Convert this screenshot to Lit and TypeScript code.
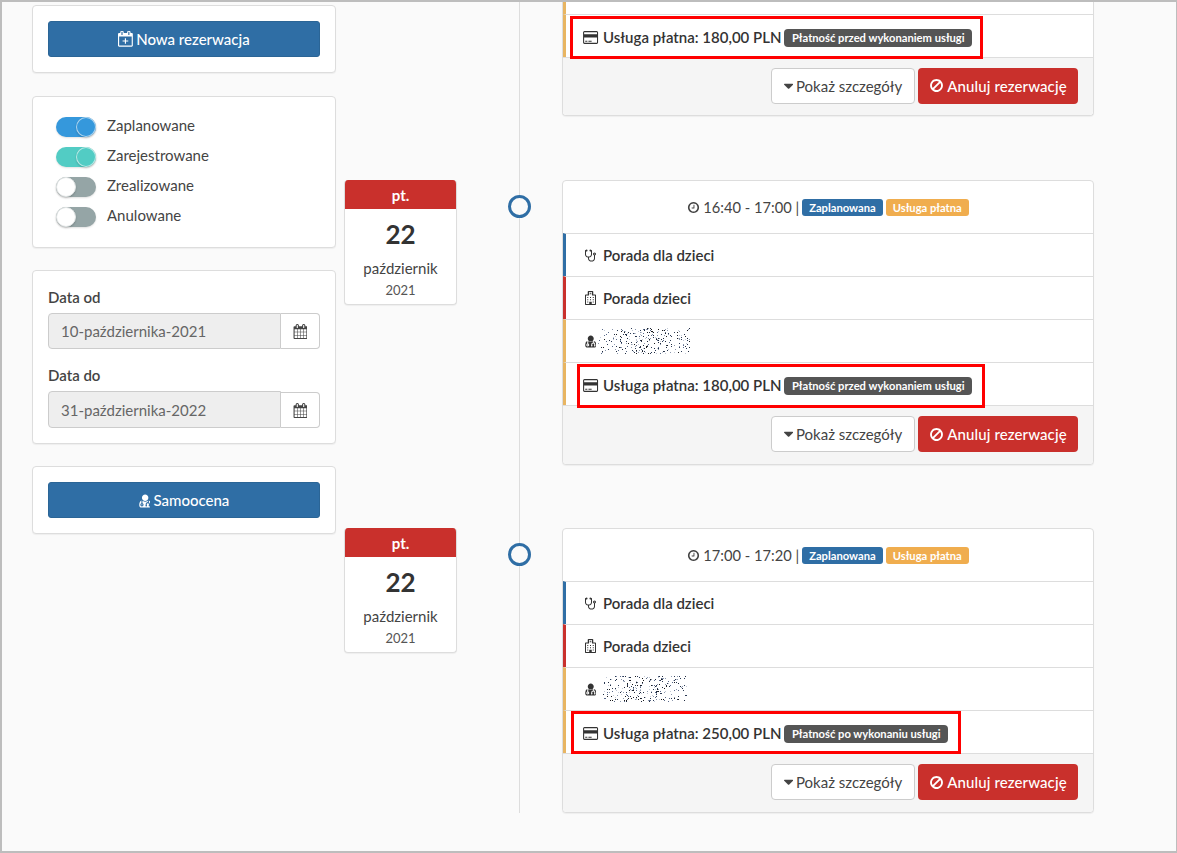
import { LitElement, html, css, svg } from "lit";
import { customElement } from "lit/decorators.js";

const P: Record<string, [number, number, string]> = {
  card: [2048, 1792, "M1760 128q66 0 113 47t47 113v1216q0 66-47 113t-113 47h-1472q-66 0-113-47t-47-113v-1216q0-66 47-113t113-47h1472zm-1472 128q-13 0-22.5 9.5t-9.5 22.5v224h1536v-224q0-13-9.5-22.5t-22.5-9.5h-1472zm1472 1280q13 0 22.5-9.5t9.5-22.5v-608h-1536v608q0 13 9.5 22.5t22.5 9.5h1472zm-1376-128v-128h256v128h-256zm384 0v-128h384v128h-384z"],
  clock: [1792, 1792, "M1024 544v448q0 14-9 23t-23 9h-320q-14 0-23-9t-9-23v-64q0-14 9-23t23-9h224v-352q0-14 9-23t23-9h64q14 0 23 9t9 23zm416 352q0-148-73-273t-198-198-273-73-273 73-198 198-73 273 73 273 198 198 273 73 273-73 198-198 73-273zm224 0q0 209-103 385.5t-279.5 279.5-385.5 103-385.5-103-279.5-279.5-103-385.5 103-385.5 279.5-279.5 385.5-103 385.5 103 279.5 279.5 103 385.5z"],
  ban: [1792, 1792, "M1440 893q0-161-87-295l-754 753q137 89 297 89 111 0 211.5-43.5t173.5-116.5 116-174.5 43-212.5zm-999 299l755-754q-135-91-300-91-148 0-273 73t-198 199-73 274q0 162 89 299zm1223-299q0 157-61 300t-163.5 246-245 164-298.5 61-298.5-61-245-164-163.5-246-61-300 61-299.5 163.5-245.5 245-164 298.5-61 298.5 61 245 164 163.5 245.5 61 299.5z"],
  caret: [1024, 1792, "M1024 704q0 26-19 45l-448 448q-19 19-45 19t-45-19l-448-448q-19-19-19-45t19-45 45-19h896q26 0 45 19t19 45z"],
  cal: [1664, 1792, "M192 1664h288v-288h-288v288zm352 0h320v-288h-320v288zm-352-352h288v-320h-288v320zm352 0h320v-320h-320v320zm-352-384h288v-288h-288v288zm736 736h320v-288h-320v288zm-384-736h320v-288h-320v288zm768 736h288v-288h-288v288zm-384-352h320v-320h-320v320zm-352-864v-288q0-13-9.5-22.5t-22.5-9.5h-64q-13 0-22.5 9.5t-9.5 22.5v288q0 13 9.5 22.5t22.5 9.5h64q13 0 22.5-9.5t9.5-22.5zm736 864h288v-320h-288v320zm-384-384h320v-288h-320v288zm384 0h288v-288h-288v288zm32-480v-288q0-13-9.5-22.5t-22.5-9.5h-64q-13 0-22.5 9.5t-9.5 22.5v288q0 13 9.5 22.5t22.5 9.5h64q13 0 22.5-9.5t9.5-22.5zm384-64v1280q0 52-38 90t-90 38h-1408q-52 0-90-38t-38-90v-1280q0-52 38-90t90-38h128v-96q0-66 47-113t113-47h64q66 0 113 47t47 113v96h384v-96q0-66 47-113t113-47h64q66 0 113 47t47 113v96h128q52 0 90 38t38 90z"],
  calplus: [1664, 1792, "M1536 224q52 0 90 38t38 90v1280q0 52-38 90t-90 38h-1408q-52 0-90-38t-38-90v-1280q0-52 38-90t90-38h128v-96q0-66 47-113t113-47h64q66 0 113 47t47 113v96h384v-96q0-66 47-113t113-47h64q66 0 113 47t47 113v96h128zm-384-96v288q0 14 9 23t23 9h64q14 0 23-9t9-23v-288q0-14-9-23t-23-9h-64q-14 0-23 9t-9 23zm-768 0v288q0 14 9 23t23 9h64q14 0 23-9t9-23v-288q0-14-9-23t-23-9h-64q-14 0-23 9t-9 23zm1152 1504v-1024h-1408v1024h1408zm-640-576h224q14 0 23 9t9 23v64q0 14-9 23t-23 9h-224v224q0 14-9 23t-23 9h-64q-14 0-23-9t-9-23v-224h-224q-14 0-23-9t-9-23v-64q0-14 9-23t23-9h224v-224q0-14 9-23t23-9h64q14 0 23 9t9 23v224z"],
  steth: [1408, 1792, "M1280 768q0-26-19-45t-45-19-45 19-19 45 19 45 45 19 45-19 19-45zm128 0q0 62-35 111.5t-93 72.5v397q0 159-131.5 271.5t-316.5 112.5-316.5-112.5-131.5-271.5v-132q-164-20-274-128t-110-252v-512q0-26 19-45t45-19q6 0 16 2 17-30 47-48t65-18q53 0 90.5 37.5t37.5 90.5-37.5 90.5-90.5 37.5q-33 0-64-18v402q0 106 94 181t226 75 226-75 94-181v-402q-31 18-64 18-53 0-90.5-37.5t-37.5-90.5 37.5-90.5 90.5-37.5q35 0 65 18t47 48q10-2 16-2 26 0 45 19t19 45v512q0 144-110 252t-274 128v132q0 106 94 181t226 75 226-75 94-181v-397q-58-23-93-72.5t-35-111.5q0-80 56-136t136-56 136 56 56 136z"],
  hosp: [1408, 1792, "M448 0h512q40 0 68 28t28 68v352h256q40 0 68 28t28 68v1152q0 40-28 68t-68 28h-1216q-40 0-68-28t-28-68v-1152q0-40 28-68t68-28h256v-352q0-40 28-68t68-28zM512 128v448h-352q-32 0-32 32v1024q0 32 32 32h384v-256q0-32 32-32h256q32 0 32 32v256h384q32 0 32-32v-1024q0-32-32-32h-352v-448h-384zM608 192h64v96h64v-96h64v256h-64v-96h-64v96h-64zM288 768h128v128h-128zM640 768h128v128h-128zM992 768h128v128h-128zM288 1056h128v128h-128zM640 1056h128v128h-128zM992 1056h128v128h-128zM288 1344h128v128h-128zM992 1344h128v128h-128z"],
  user: [1408, 1792, "M416 1408q0 26-19 45t-45 19-45-19-19-45 19-45 45-19 45 19 19 45zm1024 62q0 121-73 190t-194 69h-874q-121 0-194-69t-73-190q0-68 5.5-131t24-138 47.5-132.5 81-103 120-60.5q-22 52-22 120v203q-58 20-93 70t-35 111q0 80 56 136t136 56 136-56 56-136q0-61-35.5-111t-92.5-70v-203q0-62 25-93 132 104 295 104t295-104q25 31 25 93v64q-106 0-181 75t-75 181v89q-32 29-32 71 0 40 28 68t68 28 68-28 28-68q0-42-32-71v-89q0-52 38-90t90-38 90 38 38 90v89q-32 29-32 71 0 40 28 68t68 28 68-28 28-68q0-42-32-71v-89q0-68-34.5-127.5t-93.5-93.5q0-10 .5-42.5t0-48-2.5-41.5-7-47-13-40q68 15 120 60.5t81 103 47.5 132.5 24 138 5.5 131zm-320-893q0 159-112.5 271.5t-271.5 112.5-271.5-112.5-112.5-271.5 112.5-271.5 271.5-112.5 271.5 112.5 112.5 271.5z"],
};

const icon = (n: string, h = 14) => {
  const [w, vh, d] = P[n];
  return html`<svg class="ic" viewBox="0 0 ${w} ${vh}" width=${(h * w) / 1792} height=${h} fill-rule=${n === "hosp" ? "evenodd" : "nonzero"}><path fill="currentColor" d=${d}></path></svg>`;
};

function noise(seed: number, w: number, h: number) {
  let s = seed;
  const rnd = () => ((s = (s * 16807) % 2147483647) - 1) / 2147483646;
  const cols = ["#2b3a55", "#1f2a3f", "#1a1a1a", "#5a6a8a", "#8b97ad", "#c2c9d6"];
  const dots: unknown[] = [];
  for (let i = 0; i < 400; i++) {
    const x = Math.floor(rnd() * w);
    const env = 1 - Math.abs((x / w) * 2 - 1) * 0.6;
    const y = Math.floor(rnd() * h);
    if (rnd() > env) continue;
    const c = cols[Math.floor(rnd() * cols.length)];
    dots.push(svg`<rect x=${x} y=${y} width="1" height="1" fill=${c}></rect>`);
  }
  return html`<svg class="noise" width=${w} height=${h} viewBox="0 0 ${w} ${h}" aria-hidden="true">${dots}</svg>`;
}

interface Ev { time: string; price: string; pay: string; boxL: number; boxW: number; boxT: number; boxH: number; seed: number; nW: number; nL: number; }

const FIRST: Ev = { time: "", price: "180,00", pay: "Płatność przed wykonaniem usługi", boxL: 7, boxW: 413, boxT: 2, boxH: 43, seed: 77, nW: 92, nL: 0 };
const EVENTS: Ev[] = [
  { time: "16:40 - 17:00", price: "180,00", pay: "Płatność przed wykonaniem usługi", boxL: 14, boxW: 408, boxT: 2, boxH: 44, seed: 4242, nW: 92, nL: 0 },
  { time: "17:00 - 17:20", price: "250,00", pay: "Płatność po wykonaniu usługi", boxL: 8, boxW: 390, boxT: 1, boxH: 43, seed: 9191, nW: 84, nL: 5 },
];

@customElement("app-root")
export class AppRoot extends LitElement {
  static styles = css`
    :host { display: block; font-family: "Lato", "Liberation Sans", sans-serif; color: #333; font-size: 15px; }
    * { box-sizing: border-box; }
    .frame { height: 853px; width: 1177px; border: 2px solid #bdbdbd; border-right-width: 1px; background: #fafafa; overflow: hidden; display: flex; align-items: flex-start; padding-left: 30px; gap: 8px; }
    .ic { display: inline-block; vertical-align: -2px; flex: none; }

    .side { width: 304px; flex: none; padding-top: 3px; display: flex; flex-direction: column; }
    .panel { background: #fff; border: 1px solid #ddd; border-radius: 4px; box-shadow: 0 1px 1px rgba(0,0,0,.05); padding: 15px; }
    .panel.btnp { height: 68px; }
    .panel.toggles { margin-top: 23px; height: 152px; padding: 19px 8px 15px; display: flex; flex-direction: column; gap: 10px; }
    .panel.dates { margin-top: 22px; height: 174px; }
    .panel.btnp.last { margin-top: 22px; }
    .primary { height: 36px; background: #2f6ea5; border: 1px solid #2b6596; border-radius: 3px; color: #fff; display: flex; align-items: center; justify-content: center; gap: 3px; font-size: 15px; font-weight: 500; }

    .tg { display: flex; align-items: flex-start; height: 20px; font-size: 15px; line-height: 18px; color: #444; }
    .sw { width: 40px; height: 20px; border-radius: 10px; margin: 1px 11px 0 15px; display: flex; box-shadow: 0 1px 2px rgba(0,0,0,.12); flex: none; }
    .sw i { width: 20px; height: 20px; border-radius: 50%; display: block; border: 1px solid rgba(255,255,255,.6); box-shadow: 0 1px 2px rgba(0,0,0,.2); }
    .sw.on { justify-content: flex-end; }
    .sw.blue, .sw.blue i { background: #3598dc; }
    .sw.teal, .sw.teal i { background: #52ccc4; }
    .sw.off { background: #95a5a6; }
    .sw.off i { background: #fff; border-color: #e2e6e6; }

    .lbl { font-weight: 600; font-size: 15px; line-height: 18px; color: #444; margin: 2px 0 7px; }
    .lbl.two { margin-top: 17px; margin-bottom: 7px; }
    .ig { display: flex; height: 36px; }
    .ig.tall { height: 37px; }
    .ig .val { flex: 1; background: #eee; border: 1px solid #ccc; border-radius: 4px 0 0 4px; padding-left: 12px; display: flex; align-items: center; color: #666; font-size: 15px; }
    .ig .add { width: 39px; border: 1px solid #ccc; border-left: 0; border-radius: 0 4px 4px 0; background: #fff; display: flex; align-items: center; justify-content: center; color: #444; }
    .ig.tall .add { margin-top: 1px; height: 36px; }

    .tl { display: flex; flex-direction: column; }
    .item { display: flex; align-items: stretch; }
    .item.gap .ev { margin-bottom: 63px; }
    .item.gap .ev.partial { margin-bottom: 64px; }
    .datecol { width: 113px; flex: none; }
    .date { height: 125px; background: #fff; border: 1px solid #ddd; border-top: 0; border-radius: 4px; box-shadow: 0 1px 1px rgba(0,0,0,.05); text-align: center; overflow: hidden; }
    .date .dow { height: 29px; margin: 0 -1px; background: #c9302c; color: #fff; font-weight: 700; font-size: 15px; line-height: 31px; }
    .date .d { font-size: 26px; font-weight: 700; line-height: 30px; margin-top: 10px; }
    .date .m { font-size: 15px; line-height: 20px; margin-top: 9px; color: #444; }
    .date .y { font-size: 13px; line-height: 18px; margin-top: 3px; color: #555; }
    .spine { width: 47px; margin: 0 19px 0 39px; flex: none; display: flex; justify-content: center; background: linear-gradient(#ddd, #ddd) center / 1px 100% no-repeat; }
    .dot { width: 23px; height: 23px; margin-top: 15px; border-radius: 50%; border: 3px solid #2f6ea5; background: #fafafa; }

    .ev { width: 532px; height: 285px; flex: none; background: #fff; border: 1px solid #ddd; border-radius: 4px; box-shadow: 0 1px 1px rgba(0,0,0,.05); display: flex; flex-direction: column; }
    .ev.partial { height: 114px; border-top: 0; border-radius: 0 0 4px 4px; }
    .stub { height: 12px; flex: none; border-left: 3px solid #e8b562; }
    .head { height: 52px; flex: none; display: flex; align-items: center; justify-content: center; gap: 3px; font-size: 14.7px; color: #444; }
    .tag { display: inline-block; font-size: 11.2px; font-weight: 700; color: #fff; line-height: 17px; height: 17px; padding: 0 7px; border-radius: 3px; margin-top: 1px; }
    .tag.b { background: #2f6ea5; }
    .tag.o { background: #f0ad4e; }
    .row { position: relative; height: 43px; flex: none; border-top: 1px solid #ddd; border-left: 3px solid; display: flex; align-items: center; gap: 4px; padding-left: 16px; font-size: 15px; color: #333; }
    .row.pr { padding-top: 2px; }
    .row.c1 { border-left-color: #2f6ea5; }
    .row.c2 { border-left-color: #c9302c; }
    .row.c3 { border-left-color: #e8b562; }
    .row b { font-weight: 600; }
    .ibox { width: 17px; flex: none; display: flex; justify-content: center; }
    .noise { margin-left: -5px; display: block; }
    .pay { font-size: 11.2px; font-weight: 700; color: #fff; background: #555; height: 18px; line-height: 18px; border-radius: 4px; padding: 0 7.5px; margin: 2px 0 0 -1px; }
    .mark { position: absolute; border: 3px solid #f00; pointer-events: none; }
    .foot { flex: 1; border-top: 1px solid #ddd; background: #f5f5f5; border-radius: 0 0 4px 4px; display: flex; align-items: center; justify-content: flex-end; gap: 3px; padding: 0 15px 2px 0; }
    .btn { height: 36px; border-radius: 4px; display: flex; align-items: center; gap: 3px; font-size: 15px; }
    .btn.def { width: 144px; background: #fff; border: 1px solid #ccc; color: #444; justify-content: center; }
    .btn.dan { width: 160px; background: #c9302c; color: #fff; justify-content: center; font-weight: 500; gap: 3px; letter-spacing: .1px; }
  `;

  private toggle(label: string, cls: string) {
    return html`<div class="tg"><span class="sw ${cls}"><i></i></span>${label}</div>`;
  }

  private payRow(e: Ev) {
    return html`<div class="row c3 pr">
      <span class="ibox">${icon("card", 15)}</span><b>Usługa płatna: ${e.price} PLN</b><span class="pay">${e.pay}</span>
      <div class="mark" style="left:${e.boxL - 3}px;top:${e.boxT - 1}px;width:${e.boxW}px;height:${e.boxH}px"></div>
    </div>`;
  }

  private foot() {
    return html`<div class="foot">
      <div class="btn def">${icon("caret", 16)}Pokaż szczegóły</div>
      <div class="btn dan">${icon("ban", 15)}Anuluj rezerwację</div>
    </div>`;
  }

  private event(e: Ev, i: number) {
    return html`
      <div class="item ${i < EVENTS.length - 1 ? "gap" : ""}">
        <div class="datecol">
          <div class="date">
            <div class="dow">pt.</div>
            <div class="d">22</div>
            <div class="m">październik</div>
            <div class="y">2021</div>
          </div>
        </div>
        <div class="spine"><div class="dot"></div></div>
        <div class="ev">
          <div class="head">
            ${icon("clock", 13)}<span>${e.time} |</span>
            <span class="tag b">Zaplanowana</span><span class="tag o">Usługa płatna</span>
          </div>
          <div class="row c1"><span class="ibox">${icon("steth", 14)}</span><b>Porada dla dzieci</b></div>
          <div class="row c2"><span class="ibox">${icon("hosp", 14)}</span><b>Porada dzieci</b></div>
          <div class="row c3"><span class="ibox">${icon("user", 14)}</span><span style="margin-left:${e.nL}px">${noise(e.seed, e.nW, 26)}</span></div>
          ${this.payRow(e)}
          ${this.foot()}
        </div>
      </div>`;
  }

  render() {
    return html`
      <div class="frame">
        <div class="side">
          <div class="panel btnp"><div class="primary">${icon("calplus", 16)}Nowa rezerwacja</div></div>
          <div class="panel toggles">
            ${this.toggle("Zaplanowane", "on blue")}
            ${this.toggle("Zarejestrowane", "on teal")}
            ${this.toggle("Zrealizowane", "off")}
            ${this.toggle("Anulowane", "off")}
          </div>
          <div class="panel dates">
            <div class="lbl">Data od</div>
            <div class="ig"><div class="val">10-października-2021</div><div class="add">${icon("cal", 15)}</div></div>
            <div class="lbl two">Data do</div>
            <div class="ig tall"><div class="val">31-października-2022</div><div class="add">${icon("cal", 15)}</div></div>
          </div>
          <div class="panel btnp last"><div class="primary">${icon("user", 15)}Samoocena</div></div>
        </div>
        <div class="tl">
          <div class="item gap">
            <div class="datecol"></div>
            <div class="spine"></div>
            <div class="ev partial">
              <div class="stub"></div>
              ${this.payRow(FIRST)}
              ${this.foot()}
            </div>
          </div>
          ${EVENTS.map((e, i) => this.event(e, i))}
        </div>
      </div>`;
  }
}
